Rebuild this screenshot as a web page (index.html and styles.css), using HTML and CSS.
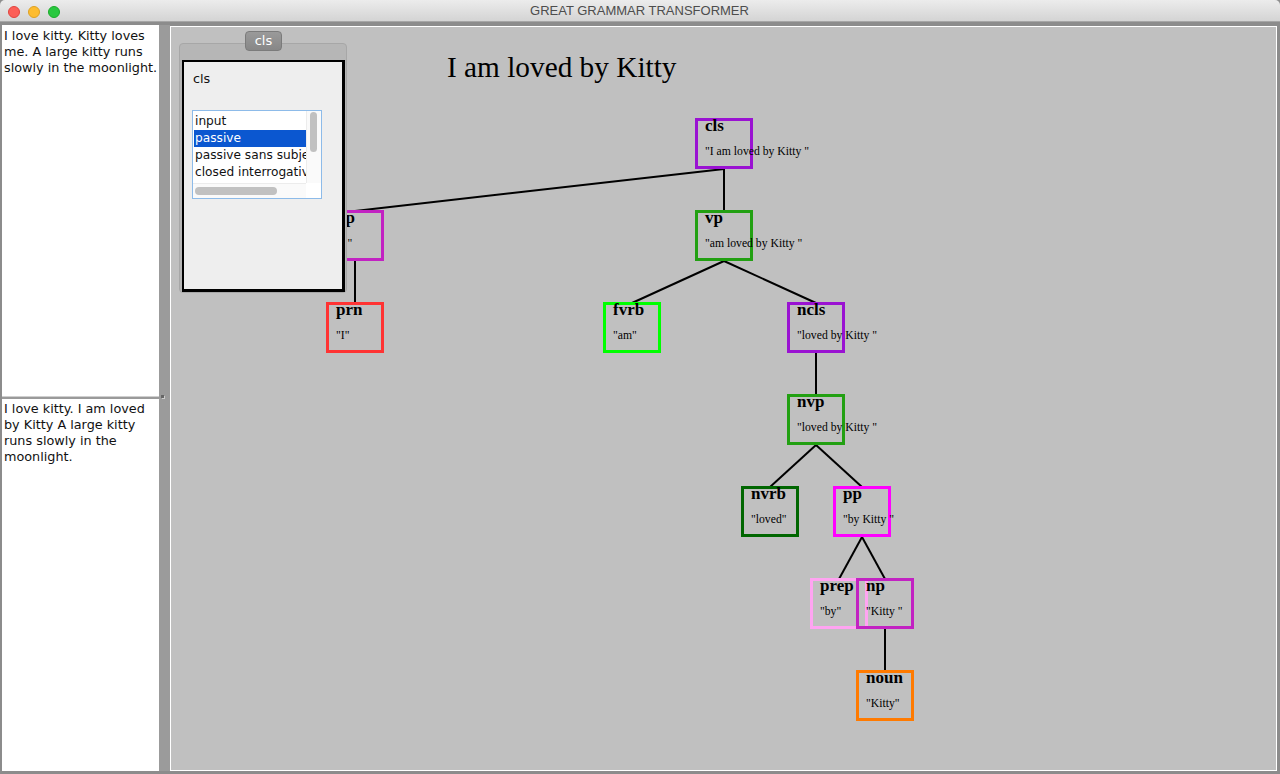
FILE: index.html
```html
<!DOCTYPE html>
<html>
<head>
<meta charset="utf-8">
<title>GREAT GRAMMAR TRANSFORMER</title>
<link rel="stylesheet" href="styles.css">
</head>
<body>
<div class="window">
  <div class="titlebar">
    <div class="lights">
      <span class="light red"></span>
      <span class="light yellow"></span>
      <span class="light green"></span>
    </div>
    <div class="title">GREAT GRAMMAR TRANSFORMER</div>
  </div>
  <div class="main">
    <div class="left">
      <div class="textarea top">I love kitty. Kitty loves<br>me. A large kitty runs<br>slowly in the moonlight.</div>
      <div class="hsplit"></div>
      <div class="textarea bottom">I love kitty. I am loved<br>by Kitty A large kitty<br>runs slowly in the<br>moonlight.</div>
    </div>
    <div class="vsplit"><span class="grip"></span></div>
    <div class="canvas">
      <div class="heading">I am loved by Kitty</div>
      <svg class="edges" width="1106" height="744" viewBox="0 0 1106 744">
        <g stroke="#000" stroke-width="2" fill="none">
          <line x1="553" y1="142" x2="553" y2="183"/>
          <line x1="553" y1="142" x2="184" y2="184"/>
          <line x1="184" y1="234" x2="184" y2="275"/>
          <line x1="553" y1="234" x2="461" y2="276"/>
          <line x1="553" y1="234" x2="645" y2="276"/>
          <line x1="645" y1="326" x2="645" y2="367"/>
          <line x1="645" y1="418" x2="599" y2="460"/>
          <line x1="645" y1="418" x2="691" y2="460"/>
          <line x1="691" y1="510" x2="668" y2="552"/>
          <line x1="691" y1="510" x2="714" y2="552"/>
          <line x1="714" y1="602" x2="714" y2="643"/>
        </g>
      </svg>
      <div class="node n-cls"><div class="lbl">cls</div><div class="txt">"I am loved by Kitty "</div></div>
      <div class="node n-p"><div class="lbl">np</div><div class="txt">"I "</div></div>
      <div class="node n-vp"><div class="lbl">vp</div><div class="txt">"am loved by Kitty "</div></div>
      <div class="node n-prn"><div class="lbl">prn</div><div class="txt">"I"</div></div>
      <div class="node n-fvrb"><div class="lbl">fvrb</div><div class="txt">"am"</div></div>
      <div class="node n-ncls"><div class="lbl">ncls</div><div class="txt">"loved by Kitty "</div></div>
      <div class="node n-nvp"><div class="lbl">nvp</div><div class="txt">"loved by Kitty "</div></div>
      <div class="node n-nvrb"><div class="lbl">nvrb</div><div class="txt">"loved"</div></div>
      <div class="node n-pp"><div class="lbl">pp</div><div class="txt">"by Kitty "</div></div>
      <div class="node n-prep"><div class="lbl">prep</div><div class="txt">"by"</div></div>
      <div class="node n-np"><div class="lbl">np</div><div class="txt">"Kitty "</div></div>
      <div class="node n-noun"><div class="lbl">noun</div><div class="txt">"Kitty"</div></div>

      <div class="inspector">
        <div class="tab">cls</div>
        <div class="frame">
          <div class="box">
            <div class="box-label">cls</div>
            <div class="list">
              <div class="items">
                <div class="item">input</div>
                <div class="item selected">passive</div>
                <div class="item">passive sans subject</div>
                <div class="item">closed interrogative</div>
              </div>
              <div class="vscroll"><span class="vthumb"></span></div>
              <div class="hscroll"><span class="hthumb"></span></div>
              <div class="corner"></div>
            </div>
          </div>
        </div>
      </div>
    </div>
  </div>
</div>
</body>
</html>
```

FILE: styles.css
```css
* { box-sizing: border-box; }
html, body { margin: 0; padding: 0; }
body {
  width: 1280px;
  height: 774px;
  overflow: hidden;
  background: #8e8e8e;
  font-family: "DejaVu Sans", sans-serif;
}
.window {
  width: 1280px;
  height: 774px;
  display: flex;
  flex-direction: column;
}
.titlebar {
  height: 22px;
  flex: none;
  position: relative;
  display: flex;
  align-items: center;
  justify-content: center;
  background: linear-gradient(#ececec, #d4d4d4);
  border-bottom: 1px solid #a6a6a6;
  border-radius: 5px 5px 0 0;
}
.lights {
  position: absolute;
  left: 8px;
  top: 6px;
  display: flex;
  gap: 8px;
}
.light {
  width: 12px;
  height: 12px;
  border-radius: 50%;
  display: block;
}
.light.red { background: #fc5f57; border: 1px solid #e0443e; }
.light.yellow { background: #fdbc2f; border: 1px solid #dea123; }
.light.green { background: #29c83f; border: 1px solid #1aab29; }
.title {
  font-family: "Liberation Sans", Arial, sans-serif;
  font-size: 13px;
  color: #4d4d4d;
  letter-spacing: 0;
  margin-left: -1px;
}
.main {
  flex: 1;
  display: flex;
  padding: 3px 3px 3px 2px;
  background: #8c8c8c;
}
.left {
  width: 157px;
  flex: none;
  display: flex;
  flex-direction: column;
}
.textarea {
  background: #fff;
  color: #111;
  font-family: "DejaVu Sans", sans-serif;
  font-size: 12.8px;
  line-height: 16px;
  padding: 2px 2px;
  white-space: nowrap;
  overflow: hidden;
}
.textarea.top { height: 371px; flex: none; padding-top: 3px; }
.textarea.bottom { flex: 1; }
.hsplit {
  height: 3px;
  flex: none;
  background: #9a9a9a;
  border-top: 1px solid #cfcfcf;
}
.vsplit {
  width: 11px;
  flex: none;
  background: #9b9b9b;
  position: relative;
}
.grip {
  position: absolute;
  left: 2px;
  top: 370px;
  width: 3px;
  height: 3px;
  background: #666;
  box-shadow: 1px 1px 0 #ccc;
}
.canvas {
  flex: 1;
  margin-top: 1px;
  background: #c0c0c0;
  border: 1px solid #fff;
  position: relative;
  overflow: hidden;
}
.heading {
  position: absolute;
  left: 276px;
  top: 23px;
  font-family: "Liberation Serif", "Times New Roman", serif;
  font-size: 29.3px;
  line-height: 34px;
  color: #000;
  white-space: nowrap;
}
.edges {
  position: absolute;
  left: 0;
  top: 0;
}
.node {
  position: absolute;
  width: 58px;
  height: 51px;
  border: 3px solid #000;
  padding-left: 7px;
  font-family: "Liberation Serif", "Times New Roman", serif;
  color: #000;
  white-space: nowrap;
}
.node .lbl {
  font-size: 17px;
  font-weight: bold;
  line-height: 17px;
  margin-top: -4px;
}
.node .txt {
  font-size: 11.7px;
  line-height: 12px;
  margin-top: 12px;
}
.n-cls  { left: 524px; top: 91px;  border-color: #9a12d2; }
.n-vp   { left: 524px; top: 183px; border-color: #22a012; }
.n-p    { left: 155px; top: 183px; border-color: #c222c2; }
.n-prn  { left: 155px; top: 275px; border-color: #ff3333; }
.n-fvrb { left: 432px; top: 275px; border-color: #00ff00; }
.n-ncls { left: 616px; top: 275px; border-color: #9a12d2; }
.n-nvp  { left: 616px; top: 367px; border-color: #22a012; }
.n-nvrb { left: 570px; top: 459px; border-color: #006600; }
.n-pp   { left: 662px; top: 459px; border-color: #ff00ff; }
.n-prep { left: 639px; top: 551px; border-color: #ffa4f2; }
.n-np   { left: 685px; top: 551px; border-color: #c222c2; }
.n-noun { left: 685px; top: 643px; border-color: #ff7a00; }

.inspector {
  position: absolute;
  left: 8px;
  top: 4px;
  width: 168px;
  z-index: 5;
}
.tab {
  position: relative;
  z-index: 2;
  margin-left: 66px;
  width: 37px;
  height: 20px;
  background: linear-gradient(#9a9a9a, #878787);
  border: 1px solid #7b7b7b;
  border-radius: 4px;
  color: #fff;
  font-size: 13px;
  line-height: 18px;
  text-align: center;
}
.frame {
  margin-top: -8px;
  height: 250px;
  background: #b6b6b6;
  border: 1px solid #a7a7a7;
  border-radius: 4px;
  padding: 16px 1px 0 2px;
}
.box {
  width: 163px;
  height: 232px;
  background: #eeeeee;
  border: 2px solid #000;
  border-right-width: 3px;
  border-bottom-width: 3px;
  padding: 9px 0 0 8px;
}
.box-label {
  font-size: 12.8px;
  line-height: 16px;
  color: #111;
  padding-left: 1px;
}
.list {
  margin-top: 23px;
  width: 130px;
  height: 89px;
  background: #fff;
  border: 1px solid #8dbbe9;
  display: grid;
  grid-template-columns: 1fr 15px;
  grid-template-rows: 1fr 15px;
  overflow: hidden;
}
.items {
  padding: 2px 0 0 1px;
  overflow: hidden;
}
.item {
  font-size: 12.2px;
  line-height: 17px;
  height: 17px;
  padding-left: 1px;
  color: #111;
  white-space: nowrap;
}
.item.selected {
  background: #0b57d0;
  color: #fff;
}
.vscroll {
  position: relative;
  background: #fafafa;
  border-left: 1px solid #ececec;
}
.vthumb {
  position: absolute;
  left: 3px;
  top: 1px;
  width: 7px;
  height: 40px;
  border-radius: 4px;
  background: #c1c1c1;
}
.hscroll {
  position: relative;
  background: #fafafa;
  border-top: 1px solid #ececec;
}
.hthumb {
  position: absolute;
  left: 2px;
  top: 3px;
  width: 82px;
  height: 8px;
  border-radius: 4px;
  background: #c1c1c1;
}
.corner { background: #fff; }
```
